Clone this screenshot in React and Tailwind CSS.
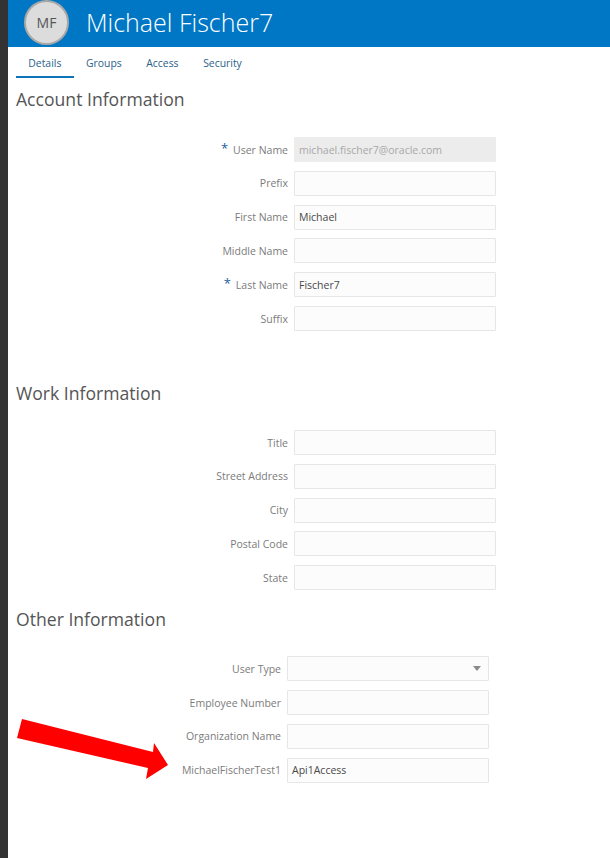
const ACCOUNT_FIELDS = [
  { label: 'User Name', value: 'michael.fischer7@oracle.com', required: true, disabled: true },
  { label: 'Prefix' },
  { label: 'First Name', value: 'Michael' },
  { label: 'Middle Name' },
  { label: 'Last Name', value: 'Fischer7', required: true },
  { label: 'Suffix' },
]
const WORK_FIELDS = [
  { label: 'Title' },
  { label: 'Street Address' },
  { label: 'City' },
  { label: 'Postal Code' },
  { label: 'State' },
]
const OTHER_FIELDS = [
  { label: 'User Type', select: true },
  { label: 'Employee Number' },
  { label: 'Organization Name' },
  { label: 'MichaelFischerTest1', value: 'Api1Access' },
]
const TABS = ['Details', 'Groups', 'Access', 'Security']

function Field({ field }) {
  return (
    <div className="flex items-center h-[25px]">
      <div className="flex-1 flex justify-end items-center pt-[2px] pr-[6px] text-[10.5px] text-[#7b7b7b] whitespace-nowrap">
        {field.required && <span className="text-[#1a5f9e] text-[13px] leading-none mr-[5px] -mt-[4px]">*</span>}
        {field.label}
      </div>
      <div
        className={`w-[202px] h-[25px] flex items-center justify-between pt-[2px] pl-[4px] pr-[7px] text-[10.5px] border rounded-[1px] ${
          field.disabled ? 'bg-[#ececec] border-[#ececec] text-[#a8a8a8]' : 'bg-[#fcfcfc] border-[#e6e6e6] text-[#484848]'
        }`}
      >
        <span>{field.value}</span>
        {field.select && <span className="w-0 h-0 -mt-[2px] border-x-[4px] border-x-transparent border-t-[5px] border-t-[#8a8a8a]" />}
      </div>
    </div>
  )
}

function Section({ title, fields, className, formClass }) {
  return (
    <section className={className}>
      <h2 className="text-[17.6px] leading-[24px] text-[#555555]">{title}</h2>
      <div className={`flex flex-col gap-[8.8px] ${formClass}`}>
        {fields.map(f => <Field key={f.label} field={f} />)}
      </div>
    </section>
  )
}

export default function App() {
  return (
    <div className="relative w-[610px] h-[858px] overflow-hidden flex bg-white font-['Open_Sans',sans-serif]">
      <div className="w-[8px] bg-[#333333] shrink-0" />
      <div className="flex-1 min-w-0">
        <header className="h-[47px] bg-[#0077c5] flex items-center pl-[16px]">
          <div className="w-[45px] h-[45px] -mt-[2px] rounded-full bg-[#dcdcdc] border-2 border-[#a8a8a8] flex items-center justify-center text-[14px] text-[#555555]">
            MF
          </div>
          <h1 className="ml-[17px] text-[25px] leading-none font-light text-white -mt-[3px]">Michael Fischer7</h1>
        </header>

        <nav className="h-[31px] flex pl-[8px] text-[10.4px] text-[#2b5f8a]">
          {TABS.map((t, i) => (
            <div
              key={t}
              className={`px-[12.3px] pt-[9px] ${i === 0 ? 'border-b-2 border-[#0c74b8]' : ''}`}
            >
              {t}
            </div>
          ))}
        </nav>

        <div className="pl-[8px]">
          <Section title="Account Information" fields={ACCOUNT_FIELDS} className="pt-[9px]" formClass="mt-[26px] w-[480px]" />
          <Section title="Work Information" fields={WORK_FIELDS} className="pt-[50px]" formClass="mt-[25px] w-[480px]" />
          <Section title="Other Information" fields={OTHER_FIELDS} className="pt-[17px]" formClass="mt-[25px] w-[473px]" />
        </div>
      </div>

      {/* annotation arrow */}
      <svg className="absolute left-0 top-0 pointer-events-none" width="610" height="858">
        <polygon points="22,719 153,752 154,743 168,765 146,779 148,768 17,738" fill="#ff0000" />
      </svg>
    </div>
  )
}
